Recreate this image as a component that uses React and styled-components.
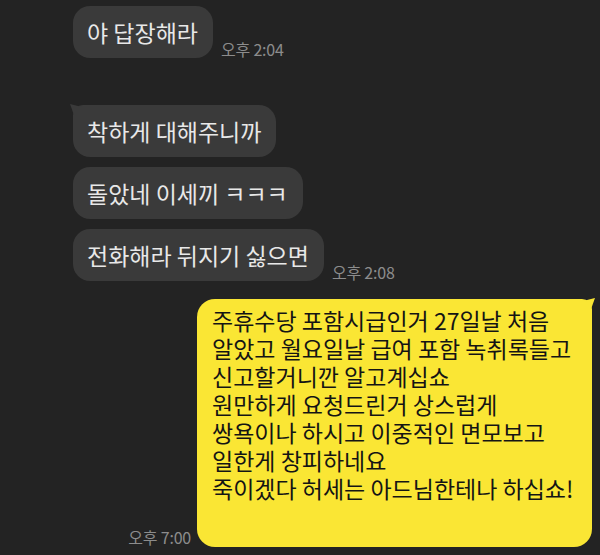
import React from "react";
import styled, { createGlobalStyle } from "styled-components";

const GlobalStyle = createGlobalStyle`
  html, body {
    margin: 0;
    padding: 0;
    background: #232323;
  }
  body {
    font-family: "Noto Sans CJK KR", "Noto Sans", sans-serif;
  }
`;

const Chat = styled.div`
  width: 600px;
  height: 555px;
  box-sizing: border-box;
  background: #232323;
  padding: 6px 8px 0 73px;
  display: flex;
  flex-direction: column;
  overflow: hidden;
`;

const Row = styled.div`
  display: flex;
  align-items: flex-end;
  gap: ${(p) => (p.$mine ? "6px" : "8px")};
  justify-content: ${(p) => (p.$mine ? "flex-end" : "flex-start")};
  margin-top: ${(p) => p.$gap || 0}px;
`;

const Bubble = styled.div`
  position: relative;
  background: #3a3a3a;
  color: #e8e8e8;
  font-size: 23px;
  line-height: 26px;
  padding: 13px 15px 13px 14px;
  border-radius: 17px;
  white-space: nowrap;

  ${(p) =>
    p.$tail &&
    `
    border-top-left-radius: 10px;
    &::before {
      content: "";
      position: absolute;
      left: -3px;
      top: -1px;
      width: 12px;
      height: 10px;
      background: #3a3a3a;
      clip-path: polygon(0 0, 100% 30%, 100% 100%, 30% 100%);
    }
  `}
`;

const MyBubble = styled.div`
  position: relative;
  width: 395px;
  box-sizing: border-box;
  background: #fae634;
  color: #141414;
  font-size: 23px;
  line-height: 28px;
  padding: 7px 16px 45px 15px;
  border-radius: 18px;
  border-top-right-radius: 10px;
  white-space: nowrap;

  &::before {
    content: "";
    position: absolute;
    right: -3px;
    top: -1px;
    width: 12px;
    height: 10px;
    background: #fae634;
    clip-path: polygon(100% 0, 0 30%, 0 100%, 70% 100%);
  }
`;

const Line = styled.div`
  height: 28px;
`;

const Time = styled.span`
  color: #8c8c8c;
  font-size: 16px;
  letter-spacing: -0.2px;
  line-height: 18px;
  white-space: nowrap;
  padding-bottom: ${(p) => p.$drop ?? 0}px;
`;

const lines = [
  "주휴수당 포함시급인거 27일날 처음",
  "알았고 월요일날 급여 포함 녹취록들고",
  "신고할거니깐 알고계십쇼",
  "원만하게 요청드린거 상스럽게",
  "쌍욕이나 하시고 이중적인 면모보고",
  "일한게 창피하네요",
  "죽이겠다 허세는 아드님한테나 하십쇼!",
];

export default function App() {
  return (
    <>
      <GlobalStyle />
      <Chat>
        <Row>
          <Bubble>야 답장해라</Bubble>
          <Time>오후 2:04</Time>
        </Row>
        <Row $gap={47}>
          <Bubble $tail>착하게 대해주니까</Bubble>
        </Row>
        <Row $gap={10}>
          <Bubble>돌았네 이세끼 ㅋㅋㅋ</Bubble>
        </Row>
        <Row $gap={10}>
          <Bubble>전화해라 뒤지기 싫으면</Bubble>
          <Time>오후 2:08</Time>
        </Row>
        <Row $mine $gap={18}>
          <Time $drop={1}>오후 7:00</Time>
          <MyBubble>
            {lines.map((l, i) => (
              <Line key={i}>{l}</Line>
            ))}
          </MyBubble>
        </Row>
      </Chat>
    </>
  );
}
